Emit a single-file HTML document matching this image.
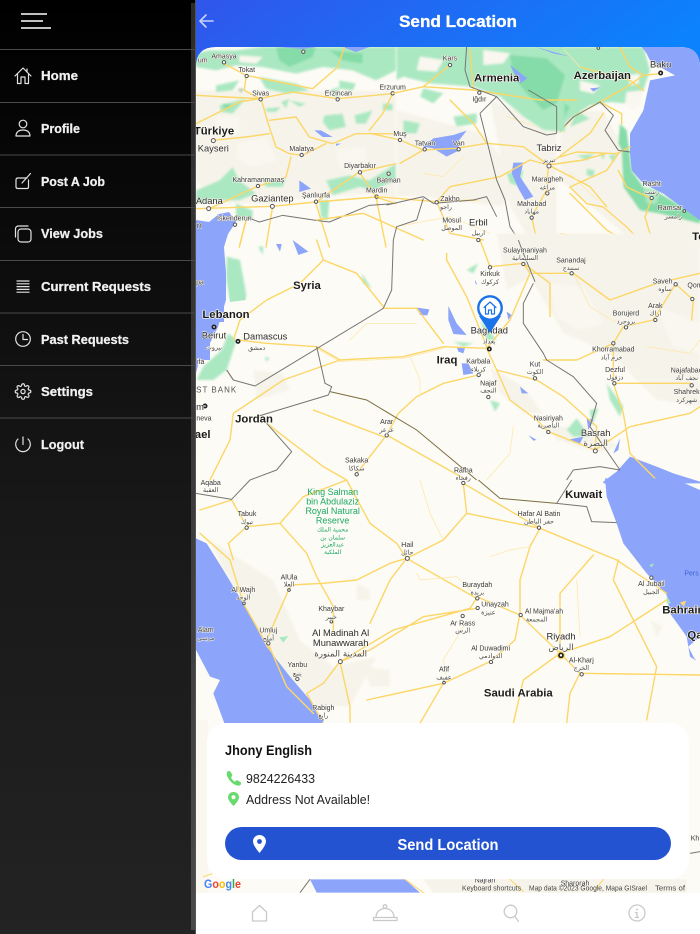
<!DOCTYPE html>
<html><head><meta charset="utf-8"><title>Send Location</title>
<style>
html,body{margin:0;padding:0;background:#fff;width:700px;height:934px;overflow:hidden}
svg{display:block;filter:blur(.3px)}
text{font-family:"Liberation Sans",sans-serif}
.r{fill:none;stroke:#fcd666;stroke-width:4.2;stroke-linejoin:round;stroke-linecap:round}
.r2{fill:none;stroke:#fde7a8;stroke-width:2.2;stroke-linejoin:round;stroke-linecap:round}
.b{fill:none;stroke:#757572;stroke-width:3;stroke-linejoin:round}
.g{fill:#aae8c2}.g2{fill:#85dca8}.t{fill:#f6f4ea}.cr{fill:#f9f7ef}
.s,.m,.c,.a{paint-order:stroke;stroke:#fdfbf5;stroke-linejoin:round;text-anchor:middle}
.s{font-size:21px;fill:#3a3a3a;stroke-width:3}
.m{font-size:28px;fill:#2c2c2c;stroke-width:3}
.c{font-size:34px;font-weight:bold;fill:#1c1c1c;stroke-width:4}
.a{font-size:19px;fill:#4c4c4c;stroke-width:3;font-family:"DejaVu Sans",sans-serif}
.d{fill:#fff;stroke:#555;stroke-width:3}
.k{fill:#fff;stroke:#222;stroke-width:5}
.lab{font-size:12.8px;font-weight:bold;fill:#f1f1f1;stroke:#f1f1f1;stroke-width:.25}
.i{fill:none;stroke:#e2e2e2;stroke-width:1.2;stroke-linejoin:round;stroke-linecap:round}
.n{fill:none;stroke:#c9c9c9;stroke-width:1.3;stroke-linejoin:round;stroke-linecap:round}
.gk{font-size:27px;fill:#1aa863;text-anchor:middle}
.ga{font-size:18px;fill:#1aa863;text-anchor:middle;font-family:"DejaVu Sans",sans-serif}
</style></head><body>
<svg width="700" height="934" viewBox="0 0 700 934" xmlns="http://www.w3.org/2000/svg">
<defs>
<linearGradient id="side" x1="0" y1="0" x2="0" y2="1"><stop offset="0" stop-color="#000"/><stop offset=".55" stop-color="#181818"/><stop offset="1" stop-color="#232323"/></linearGradient>
<linearGradient id="band" x1="0" y1="0" x2="0" y2="1"><stop offset="0" stop-color="#2c2c2c"/><stop offset="1" stop-color="#4a4a4a"/></linearGradient>
<linearGradient id="head" x1="0" y1="0" x2="1" y2="0.25"><stop offset="0" stop-color="#3056ea"/><stop offset="1" stop-color="#0c82fd"/></linearGradient>
<clipPath id="mapc"><path d="M196,67Q196,47 216,47H680Q700,47 700,67V893H196Z"/></clipPath>
<filter id="soft" x="-10%" y="-10%" width="120%" height="120%"><feGaussianBlur stdDeviation="3.500"/></filter>
</defs>
<rect width="700" height="934" fill="#fff"/>
<!-- header -->
<rect x="196" width="504" height="90" fill="url(#head)"/>
<text x="458" y="27" text-anchor="middle" font-size="16.500" font-weight="bold" fill="#fff" stroke="#fff" stroke-width=".3" textLength="118" lengthAdjust="spacingAndGlyphs">Send Location</text>
<path d="M213,21H200M206,15L200,21L206,27" fill="none" stroke="#c6d3ff" stroke-width="1.6" stroke-linecap="round" stroke-linejoin="round"/>
<!-- map -->
<g clip-path="url(#mapc)">
<rect x="196" y="47" width="504" height="846" fill="#fdfbf5"/>

<!-- Turkey detail (crop coords) -->
<g transform="translate(196 47) scale(.33333)">
<g filter="url(#soft)">
<path class="t" d="M0,130H600V470L540,440L360,450L220,470L60,470L0,400Z"/>
<path class="cr" d="M130,290L210,270L240,340L170,360L120,330ZM60,210L130,210L130,260L70,260ZM420,310L510,300L500,370L430,360Z"/>
<path class="g" d="M0,20L40,10L120,10L200,0H600V70L540,100L470,70L380,60L300,80L200,60L120,55L60,70L0,60Z"/>
<path class="g2" d="M240,0H360L350,30L280,60L250,40ZM400,10L500,20L500,50L440,40Z"/>
<path class="cr" d="M130,25L200,30L180,50L130,45Z"/>
<path class="g" d="M190,90L300,110L340,130L270,140L210,125ZM60,115L130,100L110,130L60,135ZM70,175L150,155L110,200L75,195ZM255,165L280,155L270,185ZM280,160L330,170L310,180ZM205,185L255,180L240,195L215,195ZM385,205L440,200L450,240L400,250L380,225ZM475,205L530,190L510,230L480,230ZM400,130L430,120L420,150ZM0,430L70,400L110,360L130,400L180,440L130,460L60,460L0,470ZM200,400L270,395L260,420L210,420ZM390,400L460,385L520,400L600,350V400L530,430L490,420L410,445ZM370,460L400,460L395,520L375,510ZM120,470L170,490L170,515L120,520ZM430,100L480,110L470,130L430,125ZM560,170L590,170L590,190L560,190Z"/>
<path class="g2" d="M80,170L105,170L100,185L85,185Z"/>
<path d="M125,125L145,125L135,138Z" fill="#b5c9b0"/>
</g>
<path fill="#8ca5fb" d="M355,250L375,250L410,270L380,270ZM310,400L345,425L310,435ZM440,0H520L480,15ZM250,0H360L320,6ZM0,240L10,250L0,265ZM420,290L435,290L420,297Z"/>
<path class="r" d="M0,145L90,150L190,155L290,135L425,155L590,140M195,155L215,225L240,300L280,320L320,325L390,290M220,220L300,210L340,270L410,290L480,260L600,260M150,90L145,130L190,155M50,280L150,270L220,260M85,50L150,85L350,125M285,330L270,390L180,420L40,485M0,485L230,478L360,465L540,450L600,470M360,465L490,375L600,350M490,375L540,450M590,140L560,200L520,250M230,478L210,600M360,470L400,600M540,450L570,600M150,520L130,600M0,230L60,200L130,165L190,155M445,0L425,60L350,125"/>
<path class="b" d="M150,510L190,525L260,505L360,520L400,525L520,475L590,470"/>
<circle class="d" cx="322" cy="14" r="5"/><circle class="d" cx="84" cy="46" r="5"/><circle class="d" cx="152" cy="87" r="5"/><circle class="d" cx="194" cy="157" r="5"/><circle class="d" cx="425" cy="157" r="5"/><circle class="d" cx="590" cy="139" r="5"/><circle class="d" cx="52" cy="281" r="6"/><circle class="d" cx="317" cy="324" r="5"/><circle class="d" cx="492" cy="376" r="5"/><circle class="d" cx="578" cy="380" r="5"/><circle class="d" cx="542" cy="449" r="5"/><circle class="d" cx="186" cy="417" r="5"/><circle class="d" cx="360" cy="464" r="5"/><circle class="d" cx="229" cy="478" r="6"/><circle class="d" cx="38" cy="485" r="6"/>
</g>

<!-- Azerbaijan/Caspian detail (crop coords) -->
<g transform="translate(560 47) scale(.33333)">
<g filter="url(#soft)">
<path class="t" d="M0,190L130,190L190,300L185,410L240,490L300,500L420,530V600H240L60,450L0,400Z"/>
<path class="g" d="M0,0H250L270,70L250,130L200,170L150,165L90,175L50,200L0,240ZM50,325L105,320L80,340ZM120,320L135,320L130,340ZM80,365L105,370L100,390L80,385ZM50,190L90,215L30,240ZM145,325L170,320L160,345Z"/>
<path class="cr" d="M205,85L240,80L235,110L210,115ZM60,100L120,115L100,140L60,130ZM200,135L245,130L240,175L215,190L195,170Z"/>
<path class="g2" d="M180,230L200,250L215,370L250,420L300,440L420,510V530L300,500L240,490L190,420L185,310L175,290ZM0,160L30,180L10,215L0,220Z"/>
<path class="g" d="M250,420L300,430L290,470L260,470Z"/>
</g>
<path fill="#8ca5fb" d="M245,0H420V520L310,440L250,410L215,370L210,320L210,260L250,190L270,100L345,85L300,60L270,40L260,20Z"/>
<path class="r" d="M0,255L40,210L120,165L185,200L185,230M120,165L200,120L250,85L300,80M60,60L210,100L250,130M180,0L210,60L250,85M0,330L50,315L170,320L210,300M30,420L80,470L130,480L200,540L260,600M30,420L140,370L175,320M275,455L255,510L270,560M275,455L200,420L175,370M0,560L120,580"/>
<path d="M5,0L60,60" class="r2"/>
<path class="b" d="M0,250L40,210L120,165L160,205L135,250L175,310L210,315"/>
<circle class="d" cx="115" cy="3" r="4"/><circle class="d" cx="275" cy="453" r="5"/><circle class="d" cx="373" cy="492" r="4"/>
</g>

<!-- zone A: east part -->
<g transform="translate(190 0) scale(.33333)">
<g filter="url(#soft)">
<path class="t" d="M620,330L880,400L1000,560L930,620L700,590L620,590Z"/>
<path class="t" d="M900,300L1100,380L1100,740H1030L960,620Z"/>
<path class="g" d="M620,140H1120L1125,395L1060,390L1000,350L930,290L850,260L720,250L640,230L620,240ZM640,360L690,370L680,400L640,400ZM700,265L760,280L730,310L690,290ZM790,350L860,340L860,370L800,380ZM950,520L1000,510L990,560L960,550Z"/>
<path class="cr" d="M690,170L760,180L740,215L680,210ZM880,150L960,160L940,190L880,195Z"/>
<path class="g2" d="M960,165L1070,175L1125,225L1100,310L1060,330L1010,280L970,230Z"/>
</g>
<path fill="#8ca5fb" d="M700,440L730,415L790,405L830,392L800,430L810,450L770,470L730,445ZM970,488L1000,488L990,530L1030,590L1005,600L985,565L965,520ZM960,195L1012,235L990,250ZM1035,140L1140,170L1090,160ZM1200,265L1230,262L1210,275Z"/>
<path class="r" d="M610,280L700,260L850,270M540,400L630,420L700,450L800,445L890,430M630,490L700,450M740,605L780,560L930,530L1020,480L1075,495M1075,495L1000,440L890,430L850,370L780,300M1075,495L1070,570L1025,650L1040,720M1075,495L1180,480L1250,460M1075,495L1200,400L1240,340M850,270L1050,300L1160,300M840,150L850,270M1250,620L1200,560L1075,495M1140,580L1250,690L1300,720M740,605L780,700L880,720M380,660L520,640L700,720M780,195L700,260M560,590L740,605L860,600"/>
<path class="r2" d="M820,470L760,530L700,520M950,350L1040,380M1140,520L1220,600M620,680L780,650L900,700"/>
<path class="b" d="M830,140L825,210L840,260L920,290L1000,380L1070,405L1100,400M870,340L900,460L920,540L945,600L960,680L985,720M920,290L870,340M1015,270L1100,320L1100,400M700,590L730,610L850,600L890,590L920,650M700,595L680,660L620,680L610,720M590,615L700,590"/>
<circle class="d" cx="780" cy="195" r="5"/><circle class="d" cx="868" cy="278" r="5"/><circle class="d" cx="630" cy="420" r="5"/><circle class="d" cx="704" cy="448" r="5"/><circle class="d" cx="806" cy="448" r="5"/><circle class="d" cx="740" cy="607" r="5"/><circle class="d" cx="1077" cy="498" r="6"/><circle class="d" cx="1072" cy="580" r="5"/><circle class="d" cx="1025" cy="653" r="5"/>
</g>

<!-- zone B -->
<g transform="translate(190 240) scale(.33333)">
<g filter="url(#soft)">
<path class="t" d="M985,-20H1530V500L1400,480L1260,340L1120,280L1030,130ZM900,380L1000,440L1060,520L1000,520L920,450ZM920,-20L1050,-20L1030,110L950,150ZM1070,560L1200,560L1290,620L1220,640L1100,600ZM190,390L280,400L300,450L200,480Z"/>
<path class="cr" d="M1080,130L1180,140L1240,250L1170,270L1100,230ZM1400,200L1530,250V340L1450,320Z"/>
<path class="g" d="M110,50L150,60L170,170L120,180L110,120ZM20,420L40,380L95,330L115,280L140,300L110,390L70,420ZM870,240L920,300L890,300ZM1130,570L1160,535L1200,590L1150,590ZM1250,430L1300,500L1290,530L1260,480ZM900,480L930,490L915,515ZM1200,510L1225,505L1205,560ZM830,90L865,70L850,100ZM205,20L220,20L218,45ZM790,305L850,310L820,320ZM515,100L545,145L520,130ZM225,350L240,355L228,365Z"/>
</g>
<path fill="#8ca5fb" d="M775,198L800,250L830,285L790,282L775,240ZM680,203L718,208L712,226L690,225ZM800,320L825,325L820,340L805,335ZM815,370L835,370L850,400L820,405ZM258,12L275,12L270,35ZM308,0L355,35L325,45ZM990,440L1015,460L995,460ZM1130,600L1180,590L1170,610ZM1015,585L1040,600L1030,602ZM1270,640L1290,595L1285,630ZM1190,535L1210,540L1195,570ZM855,118L862,135L856,130ZM950,215L965,225L955,240ZM1240,725L1280,695L1320,650L1400,680L1450,700L1530,725V730H1240Z"/>
<path class="r" d="M380,0L400,60L330,130L230,180L150,240L130,300M145,300L230,310L380,320L450,360L640,350L760,320L890,325M450,360L280,420L190,480L130,520L120,600M890,325L960,240L1020,100L1000,70L900,80L870,0M770,40L770,60L830,170L890,320M890,325L920,390L960,480L1040,540L1075,575L1215,630M920,390L1040,420L1120,470L1220,560L1215,630M865,405L760,430L680,470L625,520L590,585L500,700M400,60L500,100L580,200M580,205L680,205L760,310M1030,100L1150,100L1260,180L1400,130L1530,100M1270,310L1300,260L1390,240L1455,135M1270,310L1160,360L1060,360M1270,310L1270,430L1300,520L1320,640L1400,720M1270,430L1500,430M1215,630L1320,560L1500,520L1530,500M590,585L830,720M370,510L580,590M230,550L400,680L470,720M120,600L60,720M1000,70L1080,130L1080,230M1460,135L1510,180L1505,240"/>
<path class="r2" d="M380,325L450,365L640,355L760,325M480,300L530,250L680,250M660,350L690,420L690,470M1150,100L1200,200L1300,260M1370,320L1500,340L1530,300M970,560L960,640L890,720"/>
<path class="b" d="M1030,130L1000,190L1000,250L1060,340L1070,360L1150,410L1220,490L1200,560L1290,690M610,0L605,150L580,205L195,438L130,420L110,390M380,320L405,430L425,440L415,465L200,530M230,550L305,635L260,690L180,720M1290,690L1230,680L1150,690L1130,720M985,0L1000,40L1035,125"/>
<path d="M420,455L530,480L680,570L860,720" fill="none" stroke="#7a6e40" stroke-width="3"/>
<circle class="d" cx="900" cy="82" r="5"/><circle class="d" cx="1000" cy="72" r="5"/><circle class="d" cx="865" cy="0" r="5"/><circle class="d" cx="1145" cy="100" r="5"/><circle class="d" cx="1457" cy="133" r="5"/><circle class="d" cx="1507" cy="177" r="5"/><circle class="d" cx="1396" cy="240" r="5"/><circle class="d" cx="1308" cy="262" r="5"/><circle class="d" cx="1270" cy="310" r="5"/><circle class="d" cx="1273" cy="430" r="5"/><circle class="d" cx="1035" cy="415" r="5"/><circle class="d" cx="866" cy="405" r="5"/><circle class="d" cx="895" cy="471" r="5"/><circle class="d" cx="1075" cy="576" r="5"/><circle class="d" cx="1216" cy="633" r="6"/><circle class="d" cx="1505" cy="436" r="5"/><circle class="d" cx="590" cy="586" r="5"/><circle class="d" cx="500" cy="703" r="5"/>
</g>

<!-- zone C -->
<g transform="translate(190 480) scale(.33333)">
<g filter="url(#soft)">
<path class="t" d="M60,180L250,300L330,480L430,560L560,530L480,680L380,680L300,600L230,490L160,370L100,270ZM500,310L540,330L540,360L500,360ZM520,560L600,570L600,620L540,620ZM1380,420L1420,440L1400,470Z"/>
</g>
<path fill="#8ca5fb" d="M18,175L50,190L100,270L160,370L230,500L300,590L360,660L400,735H105L70,640L90,600L60,590L18,510ZM1245,-5L1250,50L1280,130L1300,190L1370,280L1430,345L1440,400L1490,470L1500,530L1530,550V30L1450,-5Z"/>
<path d="M1495,500L1530,470V560L1510,530Z" fill="#fdfbf5"/>
<path class="g" d="M268,472L295,468L280,488ZM1378,255L1392,250L1385,262ZM1430,345L1442,370L1430,370Z"/>
<path fill="#fdd872" d="M1470,368L1488,362L1482,380Z"/>
<path class="r" d="M30,90L125,60L170,140L115,190L130,240M170,140L270,130L340,50L470,0M270,130L350,220L380,290L430,380L430,460M300,315L400,310L500,300L600,250L650,235L760,180L830,100L820,10M650,235L860,355L840,385L610,450L450,545M860,350L990,405L1110,520M860,385L700,410L540,510L450,545M650,235L600,300L540,430M830,100L1050,145L1280,240L1430,340M1050,145L1020,200L990,300L990,400L975,480L900,545L760,610L690,730M1285,240L1270,300L1330,420L1400,560L1370,720M1110,520L1260,470L1430,360M1110,520L1170,580L1530,585M1110,520L1000,600L970,730M1170,580L1140,640L1130,730M1110,520L1110,340L1210,225M450,545L400,610L350,640L400,730M450,545L480,680L480,730M300,320L230,480L290,620L370,700M30,160L120,240L160,370L240,510M470,0L540,130L620,190L650,235M820,10L1050,145M760,610L530,660"/>
<path class="r2" d="M680,280L690,300L800,290L860,350M760,180L720,100L690,0M900,230L960,210L1020,200M1160,300L1170,470M820,440L760,540L770,600"/>
<path class="b" d="M18,40L125,58L180,0M1100,70L1190,80L1205,125L1280,128M1100,70L1145,0"/>
<path d="M865,0L930,55L1100,70" fill="none" stroke="#7a6e40" stroke-width="3"/>
<circle class="d" cx="170" cy="143" r="5"/><circle class="d" cx="652" cy="235" r="6"/><circle class="d" cx="297" cy="330" r="4"/><circle class="d" cx="162" cy="370" r="4"/><circle class="d" cx="424" cy="425" r="4"/><circle class="d" cx="235" cy="490" r="5"/><circle class="d" cx="322" cy="597" r="5"/><circle class="d" cx="395" cy="720" r="4"/><circle class="d" cx="862" cy="355" r="5"/><circle class="d" cx="863" cy="384" r="5"/><circle class="d" cx="818" cy="408" r="5"/><circle class="d" cx="992" cy="405" r="5"/><circle class="d" cx="903" cy="546" r="5"/><circle class="d" cx="762" cy="608" r="4"/><circle class="d" cx="1175" cy="583" r="5"/><circle class="d" cx="1047" cy="143" r="5"/><circle class="d" cx="1384" cy="293" r="5"/><circle class="d" cx="451" cy="545" r="6"/><circle class="d" cx="820" cy="9" r="5"/>
<circle cx="1113" cy="526" r="12" fill="#fbd65f"/>
</g>

<!-- zone D below card -->
<g transform="translate(190 720) scale(.33333)">
<rect x="18" y="0" width="35" height="518" fill="#f9f7ee"/>
<path fill="#8ca5fb" d="M102,0H400L395,10H110ZM360,478H645L690,518H380Z"/>
<path class="t" d="M700,478H1490V518H730Z"/>
<path class="r" d="M645,478L700,518M40,470L70,460M1240,478L1215,510M960,478L1000,515" style="stroke-width:3"/>
<path class="b" d="M330,518L360,478M1500,400L1530,395"/>
</g>

<!-- Mediterranean, painted above every land layer -->
<path fill="#8ca5fb" d="M196,220L209,222L219,214L229,212L236,222L228,234L224,247L226,273L226,300L218,327L210,343L200,358L196,373Z"/>
<rect x="196" y="222" width="28" height="100" fill="#8ca5fb"/>
<rect x="196" y="320" width="14" height="40" fill="#8ca5fb"/>
<path class="g" d="M227,270L240,275L246,300L230,302Z"/>
<path class="r" transform="translate(196 47) scale(.33333)" d="M150,520L130,600"/>
<path class="b" transform="translate(190 240) scale(.33333)" d="M130,420L110,390"/>
<circle class="d" transform="translate(196 47) scale(.33333)" cx="117" cy="533" r="5"/>

<!-- labels: zone A -->
<g transform="translate(190 0) scale(.33333)">
<text class="s" x="102" y="176">Amasya</text><text class="s" x="38" y="188">um</text><text class="s" x="170" y="216">Tokat</text><text class="s" x="212" y="286">Sivas</text><text class="s" x="445" y="286">Erzincan</text><text class="s" x="608" y="268">Erzurum</text><text class="s" x="780" y="182">Kars</text><text class="s" x="868" y="305">Iğdır</text><text class="s" x="630" y="408">Muş</text><text class="s" x="705" y="436">Tatvan</text><text class="s" x="806" y="436">Van</text><text class="s" x="335" y="453">Malatya</text><text class="s" x="510" y="504">Diyarbakır</text><text class="s" x="596" y="547">Batman</text><text class="s" x="560" y="577">Mardin</text><text class="s" x="205" y="546">Kahramanmaraş</text><text class="s" x="378" y="593">Şanlıurfa</text><text class="s" x="780" y="603">Zakho</text><text class="s" x="785" y="667">Mosul</text><text class="s" x="1025" y="618">Mahabad</text><text class="s" x="1072" y="545">Maragheh</text><text class="s" x="1385" y="558">Rasht</text><text class="s" x="1440" y="630">Ramsar</text><text class="s" x="133" y="662">İskenderun</text>
<text class="m" x="70" y="455">Kayseri</text><text class="m" x="247" y="604">Gaziantep</text><text class="m" x="58" y="612">Adana</text><text class="m" x="1077" y="453">Tabriz</text><text class="m" x="1412" y="202">Baku</text><text class="m" x="865" y="676">Erbil</text><text class="m" x="28" y="685">n</text>
<text class="c" x="72" y="403">Türkiye</text><text class="c" x="920" y="245">Armenia</text><text class="c" x="1237" y="237">Azerbaijan</text><text class="c" x="1525" y="720">Te</text>
<text class="a" x="1077" y="486">تبريز</text><text class="a" x="1072" y="568">مراغه</text><text class="a" x="1025" y="641">مهاباد</text><text class="a" x="1385" y="582">رشت</text><text class="a" x="1450" y="655">رامسر</text><text class="a" x="768" y="627">راجو</text><text class="a" x="785" y="690">الموصل</text><text class="a" x="865" y="705">اربيل</text>
<circle class="k" cx="1412" cy="219" r="5"/>
</g>
<!-- labels: zone B -->
<g transform="translate(190 240) scale(.33333)">
<circle class="k" cx="898" cy="327" r="5"/><circle class="k" cx="72" cy="261" r="5"/><circle class="k" cx="144" cy="304" r="5"/><circle class="k" cx="45" cy="498" r="5"/>
<text class="s" x="1005" y="38">Sulaymaniyah</text><text class="s" x="900" y="108">Kirkuk</text><text class="s" x="1143" y="67">Sanandaj</text><text class="s" x="1418" y="130">Saveh</text><text class="s" x="1515" y="142">Qom</text><text class="s" x="1396" y="204">Arak</text><text class="s" x="1308" y="226">Borujerd</text><text class="s" x="1270" y="335">Khorramabad</text><text class="s" x="1275" y="396">Dezful</text><text class="s" x="1035" y="380">Kut</text><text class="s" x="865" y="371">Karbala</text><text class="s" x="895" y="436">Najaf</text><text class="s" x="1075" y="541">Nasiriyah</text><text class="s" x="1490" y="397">Najafabad</text><text class="s" x="1490" y="462">Shahrek</text><text class="s" x="590" y="552">Arar</text><text class="s" x="500" y="668">Sakaka</text><text class="s" x="820" y="697">Rafha</text><text class="s" x="32" y="372">ifa</text><text class="s" x="30" y="134">pa</text><text class="s" x="42" y="542">neva</text>
<text class="m" x="72" y="296">Beirut</text><text class="m" x="226" y="299">Damascus</text><text class="m" x="1217" y="588">Basrah</text><text class="m" x="898" y="280">Baghdad</text><text class="m" x="30" y="510">m</text>
<text class="s" x="80" y="458" style="font-size:24px;letter-spacing:3px;fill:#555">ST BANK</text>
<text class="c" x="192" y="548">Jordan</text><text class="c" x="351" y="147">Syria</text><text class="c" x="108" y="234">Lebanon</text><text class="c" x="771" y="370">Iraq</text><text class="c" x="38" y="594">ael</text>
<text class="a" x="1005" y="60">السليمانية</text><text class="a" x="900" y="132">كركوك</text><text class="a" x="1143" y="90">سنندج</text><text class="a" x="1425" y="153">ساوه</text><text class="a" x="1396" y="226">اراك</text><text class="a" x="1308" y="250">بروجرد</text><text class="a" x="1265" y="358">خرم آباد</text><text class="a" x="1275" y="418">دزفول</text><text class="a" x="1035" y="402">الكوت</text><text class="a" x="865" y="394">كربلاء</text><text class="a" x="895" y="458">النجف</text><text class="a" x="1075" y="563">الناصرية</text><text class="a" x="898" y="310">بغداد</text><text class="a" x="72" y="328">بيروت</text><text class="a" x="200" y="330">دمشق</text><text class="a" x="1217" y="618" style="font-size:26px">البصرة</text><text class="a" x="590" y="576">عرعر</text><text class="a" x="500" y="692">سكاكا</text><text class="a" x="820" y="720">رفحاء</text><text class="a" x="1490" y="486">شهركرد</text><text class="a" x="1490" y="420">نجف آباد</text>
</g>
<!-- labels: zone C -->
<g transform="translate(190 480) scale(.33333)">
<circle class="k" cx="1113" cy="526" r="6"/>
<text class="s" x="62" y="15">Aqaba</text><text class="s" x="171" y="108">Tabuk</text><text class="s" x="652" y="201">Hail</text><text class="s" x="297" y="298">AlUla</text><text class="s" x="160" y="336">Al Wajh</text><text class="s" x="424" y="393">Khaybar</text><text class="s" x="235" y="458">Umluj</text><text class="s" x="47" y="456">Alam</text><text class="s" x="322" y="561">Yanbu</text><text class="s" x="400" y="690">Rabigh</text><text class="s" x="862" y="321">Buraydah</text><text class="s" x="915" y="380">Unayzah</text><text class="s" x="818" y="436">Ar Rass</text><text class="s" x="1062" y="401">Al Majma'ah</text><text class="s" x="902" y="512">Al Duwadimi</text><text class="s" x="762" y="575">Afif</text><text class="s" x="1174" y="548">Al-Kharj</text><text class="s" x="1047" y="108">Hafar Al Batin</text><text class="s" x="1384" y="318">Al Jubail</text>
<text class="m" x="452" y="468">Al Madinah Al</text><text class="m" x="452" y="498">Munawwarah</text><text class="m" x="1113" y="478">Riyadh</text>
<text class="c" x="1181" y="54">Kuwait</text><text class="c" x="985" y="650">Saudi Arabia</text><text class="c" x="1480" y="401">Bahrain</text><text class="c" x="1515" y="476">Qa</text>
<text x="1483" y="287" font-size="21" fill="#3f5fd0">Pers</text>
<text class="gk" x="428" y="45">King Salman</text><text class="gk" x="428" y="73">bin Abdulaziz</text><text class="gk" x="428" y="102">Royal Natural</text><text class="gk" x="428" y="131">Reserve</text>
<text class="ga" x="428" y="155">محمية الملك</text><text class="ga" x="428" y="178">سلمان بن</text><text class="ga" x="428" y="200">عبدالعزيز</text><text class="ga" x="428" y="222">الملكية</text>
<text class="a" x="62" y="36">العقبة</text><text class="a" x="171" y="132">تبوك</text><text class="a" x="652" y="224">حائل</text><text class="a" x="297" y="320">العلا</text><text class="a" x="160" y="358">الوجه</text><text class="a" x="424" y="417">خيبر</text><text class="a" x="235" y="482">أملج</text><text class="a" x="47" y="480">مرسى</text><text class="a" x="322" y="586">ينبع</text><text class="a" x="400" y="712">رابغ</text><text class="a" x="862" y="344">بريدة</text><text class="a" x="895" y="403">عنيزة</text><text class="a" x="818" y="458">الرس</text><text class="a" x="1040" y="424">المجمعة</text><text class="a" x="902" y="534">الدوادمي</text><text class="a" x="762" y="598">عفيف</text><text class="a" x="1174" y="570">الخرج</text><text class="a" x="1047" y="130">حفر الباطن</text><text class="a" x="1384" y="342">الجبيل</text><text class="a" x="452" y="530" style="font-size:26px">المدينة المنورة</text><text class="a" x="1113" y="510" style="font-size:26px">الرياض</text>
</g>
<!-- labels: zone D -->
<g transform="translate(190 720) scale(.33333)">
<text class="s" x="885" y="488">Najran</text><text class="s" x="1155" y="496">Sharorah</text><text class="s" x="1515" y="362">Kh</text>
</g>
</g>
<!-- marker -->
<path d="M479,316L490,333L501,316Z" fill="#1a73e8"/>
<circle cx="490" cy="308" r="11.7" fill="#fff" stroke="#1a73e8" stroke-width="2.4"/>
<path d="M484,307.500L490,302L496,307.500M485.500,306.500V314H488.500V310H491.500V314H494.500V306.500" fill="none" stroke="#1a73e8" stroke-width="1.2" stroke-linejoin="round" stroke-linecap="round"/>
<!-- google attribution -->
<text x="204" y="888" font-size="11.500" font-weight="bold" textLength="37" lengthAdjust="spacingAndGlyphs"><tspan fill="#4285f4">G</tspan><tspan fill="#ea4335">o</tspan><tspan fill="#fbbc05">o</tspan><tspan fill="#4285f4">g</tspan><tspan fill="#34a853">l</tspan><tspan fill="#ea4335">e</tspan></text>
<text x="462" y="890.500" font-size="7" fill="#444" textLength="59" lengthAdjust="spacingAndGlyphs">Keyboard shortcuts</text>
<text x="529" y="890.500" font-size="7" fill="#444" textLength="118" lengthAdjust="spacingAndGlyphs">Map data ©2023 Google, Mapa GISrael</text>
<text x="655" y="890.500" font-size="7" fill="#444" textLength="30" lengthAdjust="spacingAndGlyphs">Terms of</text>
<!-- card -->
<rect x="207" y="723" width="482" height="156" rx="19" fill="#fff"/>
<text x="225" y="755" font-size="14" font-weight="bold" fill="#111" textLength="87" lengthAdjust="spacingAndGlyphs">Jhony English</text>
<path d="M227.500,771.500C226.300,773 226.500,775 227.800,777.500C229.800,781.300 233,784.500 237,785.500C239,786 240.500,785.500 241,784C241.200,783 240.800,782.300 240,781.800L237.600,780.500C236.700,780 236,780.300 235.500,781L234.800,781.700C233,780.800 231.800,779.300 231,777.300L231.800,776.500C232.400,775.800 232.500,775 232,774.200L230.500,771.800C229.800,770.800 228.300,770.700 227.500,771.500Z" fill="#69da6f"/>
<text x="246" y="783" font-size="13" fill="#222" textLength="69" lengthAdjust="spacingAndGlyphs">9824226433</text>
<path d="M233.500,792C230,792 228,794.500 228,797.300C228,800.500 231.500,804 233.500,806C235.500,804 239,800.500 239,797.300C239,794.500 237,792 233.500,792Z" fill="#69da6f"/><circle cx="233.500" cy="797.300" r="2" fill="#fff"/>
<text x="246" y="804" font-size="13" fill="#222" textLength="124" lengthAdjust="spacingAndGlyphs">Address Not Available!</text>
<rect x="225" y="827" width="446" height="33" rx="16.500" fill="#2353d0"/>
<path d="M259.500,835C255.800,835 253,837.800 253,841.300C253,845.300 257.500,850.500 259.500,853C261.500,850.500 266,845.300 266,841.300C266,837.800 263.200,835 259.500,835Z" fill="#fff"/><circle cx="259.500" cy="841.500" r="2.400" fill="#2353d0"/>
<text x="448" y="850" text-anchor="middle" font-size="15.500" font-weight="bold" fill="#fff" textLength="101" lengthAdjust="spacingAndGlyphs">Send Location</text>
<!-- bottom nav -->
<path class="n" d="M252.500,912L259.500,905.500L266.500,912V921H252.500Z"/>
<path class="n" d="M376,917.500C376,912 380,908.500 385,908.500C390,908.500 394,912 394,917.500M373.500,917.500H397V920.500H373.500Z"/><circle class="n" cx="385" cy="906.500" r="1.800"/>
<circle class="n" cx="510.500" cy="911.500" r="6.300"/><path class="n" d="M515,916.500L518.500,921.500"/>
<circle class="n" cx="637" cy="913" r="8"/><path class="n" d="M637,912.500V917.500M635.500,912.500H637M635.500,917.500H638.500"/><circle cx="637" cy="909.500" r="1" fill="#c9c9c9"/>
<!-- sidebar -->
<rect width="196" height="934" fill="url(#side)"/>
<rect x="191" y="3" width="4" height="927" fill="url(#band)"/>
<rect x="195" y="0" width="1" height="934" fill="#555"/>
<path d="M21,14H47M21,21H43M21,28H51" stroke="#fff" stroke-width="1.600" fill="none"/>
<g stroke="#4a4a4a" stroke-width="1">
<path d="M0,49.500H196M0,102.500H196M0,155H196M0,207.500H196M0,260.500H196M0,313H196M0,365.500H196M0,418H196"/>
</g>
<text class="lab" x="41" y="80" textLength="37" lengthAdjust="spacingAndGlyphs">Home</text>
<text class="lab" x="41" y="133" textLength="39" lengthAdjust="spacingAndGlyphs">Profile</text>
<text class="lab" x="41" y="186" textLength="64" lengthAdjust="spacingAndGlyphs">Post A Job</text>
<text class="lab" x="41" y="238" textLength="62" lengthAdjust="spacingAndGlyphs">View Jobs</text>
<text class="lab" x="41" y="291" textLength="110" lengthAdjust="spacingAndGlyphs">Current Requests</text>
<text class="lab" x="41" y="344" textLength="88" lengthAdjust="spacingAndGlyphs">Past Requests</text>
<text class="lab" x="41" y="396" textLength="52" lengthAdjust="spacingAndGlyphs">Settings</text>
<text class="lab" x="41" y="449" textLength="43" lengthAdjust="spacingAndGlyphs">Logout</text>
<!-- sidebar icons -->
<path class="i" d="M15,76L23,68L31,76M17.500,74V83.500H21V77H25V83.500H28.500V74M27,69V71.500"/>
<circle class="i" cx="23" cy="124" r="3.800"/><path class="i" d="M16,136C16,132 19,130 23,130C27,130 30,132 30,136Z"/>
<path class="i" d="M27,178H18C16.800,178 16,178.800 16,180V187C16,188 16.800,188.500 18,188.500H27C28,188.500 28.500,188 28.500,187V180M22,183L30.500,173.500"/>
<rect class="i" x="18" y="229" width="13" height="13" rx="3"/><path class="i" d="M15.500,237V229C15.500,227 17,226 18.500,226H28"/>
<path class="i" d="M17,281H29M17,283.800H29M17,286.600H29M17,289.400H29M17,292.200H29"/>
<circle class="i" cx="23" cy="339" r="7.300"/><path class="i" d="M23,334.500V339.500H27.500"/>
<g transform="translate(14.500 383) scale(.71)"><path class="i" style="stroke-width:1.700" d="M19.400 15a1.650 1.650 0 0 0 .33 1.820l.06.06a2 2 0 0 1 0 2.830 2 2 0 0 1-2.830 0l-.06-.06a1.650 1.650 0 0 0-1.820-.33 1.650 1.650 0 0 0-1 1.510V21a2 2 0 0 1-2 2 2 2 0 0 1-2-2v-.09A1.650 1.650 0 0 0 9 19.400a1.650 1.650 0 0 0-1.820.33l-.06.06a2 2 0 0 1-2.830 0 2 2 0 0 1 0-2.830l.06-.06a1.650 1.650 0 0 0 .33-1.820 1.650 1.650 0 0 0-1.510-1H3a2 2 0 0 1-2-2 2 2 0 0 1 2-2h.09A1.650 1.650 0 0 0 4.600 9a1.650 1.650 0 0 0-.33-1.820l-.06-.06a2 2 0 0 1 0-2.830 2 2 0 0 1 2.830 0l.06.06a1.650 1.650 0 0 0 1.820.33H9a1.650 1.650 0 0 0 1-1.510V3a2 2 0 0 1 2-2 2 2 0 0 1 2 2v.09a1.650 1.650 0 0 0 1 1.510 1.650 1.650 0 0 0 1.820-.33l.06-.06a2 2 0 0 1 2.830 0 2 2 0 0 1 0 2.830l-.06.06a1.650 1.650 0 0 0-.33 1.820V9a1.650 1.650 0 0 0 1.510 1H21a2 2 0 0 1 2 2 2 2 0 0 1-2 2h-.09a1.650 1.650 0 0 0-1.510 1z"/><circle class="i" style="stroke-width:1.700" cx="12" cy="12" r="3"/></g>
<path class="i" d="M18,439A7.300,7.300 0 1 0 28,439M23,437V444.500"/>
</svg>
</body></html>
